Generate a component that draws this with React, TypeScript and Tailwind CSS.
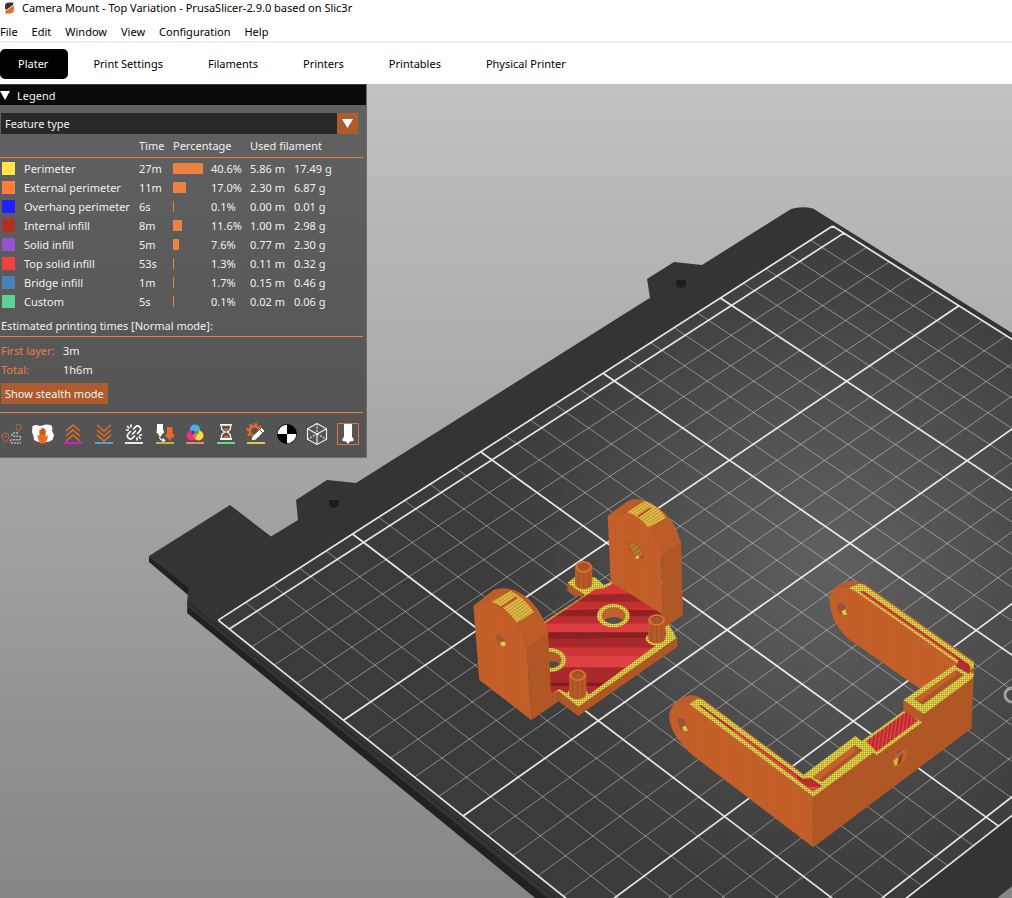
import React from "react";

type Pt = [number, number];

/* ---------- Perspective of the print bed ---------- */

// Bed millimetres (x along the back edge, y towards the front) to view units.
function project(x: number, y: number): Pt {
  const w = 0.000475 * x - 0.000478 * y + 1;
  return [
    (2.859 * x + 2.117 * y + 229.3) / w,
    (-1.473 * x + 1.48 * y + 629) / w,
  ];
}

const FRONT = 204.6;
const BACK = -5;

function points(list: Pt[]): string {
  return list.map(([x, y]) => `${x.toFixed(1)},${y.toFixed(1)}`).join(" ");
}

function segment(a: Pt, b: Pt): string {
  return `M${a[0].toFixed(1)} ${a[1].toFixed(1)}L${b[0].toFixed(1)} ${b[1].toFixed(1)}`;
}

function gridPaths() {
  let thin = "";
  let thick = "";
  for (let x = 0; x <= 250; x += 10) {
    const d = segment(project(x, BACK), project(x, FRONT));
    if (x % 50 === 0) thick += d;
    else thin += d;
  }
  for (let y = 0; y <= 200; y += 10) {
    const d = segment(project(0, y), project(250, y));
    if (y % 50 === 0) thick += d;
    else thin += d;
  }
  thick += segment(project(0, BACK), project(250, BACK));
  thick += segment(project(0, FRONT), project(250, FRONT));
  return { thin, thick };
}

function Defs() {
  return (
    <defs>
      <linearGradient id="sky" x1="0" y1="0" x2="0" y2="1">
        <stop offset="0" stopColor="#c1c1c1" />
        <stop offset="1" stopColor="#868686" />
      </linearGradient>
      <radialGradient id="sheet" gradientUnits="userSpaceOnUse" cx="830" cy="560" r="350">
        <stop offset="0" stopColor="#606060" />
        <stop offset="0.45" stopColor="#505050" />
        <stop offset="0.8" stopColor="#414141" />
        <stop offset="1" stopColor="#3b3b3b" />
      </radialGradient>
      <pattern id="yellow" width="6" height="6" patternUnits="userSpaceOnUse">
        <rect width="6" height="6" fill="#d0bf3c" />
        <rect width="3" height="3" fill="#eadd50" />
        <rect x="3" y="3" width="3" height="3" fill="#a59c34" />
      </pattern>
      <pattern id="face" width="9" height="6" patternUnits="userSpaceOnUse">
        <rect width="9" height="6" fill="#c6602a" />
        <rect x="6" width="3" height="6" fill="#c05c27" />
      </pattern>
      <pattern id="side" width="9" height="12" patternUnits="userSpaceOnUse" patternTransform="skewY(-30)">
        <rect width="9" height="12" fill="#b25826" />
        <rect x="6" y="3" width="3" height="6" fill="#a85223" />
      </pattern>
      <pattern id="arc" width="6" height="6" patternUnits="userSpaceOnUse" patternTransform="rotate(-35)">
        <rect width="6" height="6" fill="#c9642b" />
        <rect y="3" width="6" height="3" fill="#b05425" />
      </pattern>
      <pattern id="arcYellow" width="12" height="8" patternUnits="userSpaceOnUse" patternTransform="rotate(-35)">
        <rect width="12" height="8" fill="#c98a32" />
        <rect width="12" height="4" fill="#dccf48" />
      </pattern>
      <pattern id="ribs" width="11" height="30" patternUnits="userSpaceOnUse" patternTransform="skewX(-8)">
        <rect width="11" height="30" fill="#e23e42" />
        <rect x="6" width="5" height="30" fill="#ae2a2e" />
      </pattern>
    </defs>
  );
}

function Plate() {
  const { thin, thick } = gridPaths();
  const sheet = points([
    project(0, BACK),
    project(250, BACK),
    project(250, FRONT),
    project(0, FRONT),
  ]);
  return (
    <g>
      <path
        d="M149 556L149 562L188 595L187 613L545 906H990L996 898L1012 886V600L190 588Z"
        fill="#212121"
      />
      <path
        d="M149 556L230 505L271 536.500L298 520L296 500L327 480L356 483L650 297.700L647 279L674 262L702 265L791 209Q801 206 813 208.500L1012 333V886L990 904H555L187 606L188.500 588Z"
        fill="#343434"
      />
      <path d="M187.500 602L560 902" stroke="#232323" strokeWidth="1" />
      <g fill="#1d1d1d">
        <path d="M329 500h10v5a5 3 0 0 1-10 0z" />
        <path d="M676 280h10v5a5 3 0 0 1-10 0z" />
      </g>
      <polygon points={sheet} fill="url(#sheet)" />
      <path d={thin} stroke="#ffffff" strokeOpacity="0.4" strokeWidth="1" fill="none" />
      <path d={thick} stroke="#ffffff" strokeOpacity="0.88" strokeWidth="1.700" fill="none" />
      <circle cx="1012" cy="695" r="7" fill="none" stroke="#9aa3a0" strokeWidth="3" />
    </g>
  );
}

function Post({ x, y, h }: { x: number; y: number; h: number }) {
  return (
    <g>
      <ellipse cx={x} cy={y + h + 2} rx="33" ry="20" fill="url(#yellow)" />
      <path d={`M${x - 26} ${y}V${y + h}A26 16 0 0 0 ${x + 26} ${y + h}V${y}Z`} fill="#b85a28" />
      <path d={`M${x - 15} ${y}V${y + h + 10}M${x} ${y}V${y + h + 14}M${x + 15} ${y}V${y + h + 10}`} stroke="#a65123" strokeWidth="4" />
      <ellipse cx={x} cy={y} rx="26" ry="18" fill="#c9642b" />
      <ellipse cx={x} cy={y} rx="22" ry="14" fill="none" stroke="#dd7838" strokeWidth="3" />
      <ellipse cx={x} cy={y + 1} rx="16" ry="11" fill="#a9532a" />
      <path d={`M${x - 16} ${y}A16 11 0 0 1 ${x + 16} ${y}`} fill="none" stroke="#8a4420" strokeWidth="3" />
    </g>
  );
}

function BracketModel() {
  return (
    <g transform="translate(460 480) scale(0.33333)">
      {/* base plate */}
      <path d="M322 310V332L346 350L375 345V315Z" fill="#b25826" />
      <path d="M296 632V664L355 708L652 500V474L355 678Z" fill="url(#side)" />
      <path
        d="M322 308L346 290L405 292L432 315L458 303L607 400L650 474L355 680L296 632L272 645L230 600L232 440L375 345Z"
        fill="url(#yellow)"
      />
      <clipPath id="infill">
        <path d="M378 347L405 328L432 325L462 308L607 402L620 472L372 654L350 655L298 627L276 640L240 600V440Z" />
      </clipPath>
      <g clipPath="url(#infill)">
        <rect x="200" y="300" width="460" height="390" fill="#d63538" />
        <path d="M200 348L660 338V366H200Z" fill="#9a2628" />
        <rect x="200" y="365" width="460" height="20" fill="#c43032" />
        <path d="M200 394L430 387L660 392V410H200Z" fill="#8f2224" />
        <rect x="200" y="409" width="460" height="22" fill="#b82d2f" />
        <rect x="200" y="431" width="460" height="26" fill="#dc3d40" />
        <path d="M200 457H660V472L200 480Z" fill="#8a2022" />
        <path d="M200 480L660 472V503H200Z" fill="#a9282b" />
        <rect x="200" y="503" width="460" height="25" fill="#cf3436" />
        <rect x="200" y="528" width="460" height="34" fill="#de4144" />
        <rect x="200" y="562" width="460" height="46" fill="#a9282b" />
        <rect x="200" y="608" width="460" height="10" fill="#7e1c1e" />
        <rect x="200" y="618" width="460" height="60" fill="#b02a2d" />
      </g>
      <path d="M248 428L375 346" stroke="#c6602a" strokeWidth="3" />
      <ellipse cx="460" cy="407" rx="49" ry="35" fill="url(#yellow)" />
      <ellipse cx="461" cy="407" rx="35" ry="25" fill="#c0602a" />
      <path d="M432 420Q460 402 490 420Q478 431 461 431Q444 431 432 420Z" fill="#50504e" />
      <ellipse cx="269" cy="540" rx="49" ry="36" fill="url(#yellow)" />
      <ellipse cx="269" cy="540" rx="35" ry="25" fill="#b5582a" />
      <path d="M264 545Q285 540 300 552Q290 563 264 564Z" fill="#4c4c4c" />
      {/* rear lug */}
      <path d="M605 225L663 185L669 405L614 442L607 400Z" fill="url(#side)" />
      <path
        d="M443 107L505 62Q535 52 565 65Q632 100 652 155L663 187L604 228C590 170 560 125 520 104C495 92 470 95 443 107Z"
        fill="url(#arc)"
      />
      <path d="M500 97L555 63Q600 80 618 115L562 143Q535 108 500 97Z" fill="url(#arcYellow)" />
      <path d="M534 110L572 84" stroke="#c9452e" strokeWidth="6" />
      <path d="M443 107C470 93 495 92 520 104C560 125 590 170 604 226L607 402L452 306Z" fill="url(#face)" />
      <path d="M497 180L520 184L550 212L551 244L522 234L502 208Z" fill="#b3602a" />
      <path d="M508 197L522 190L546 212L544 232L524 228Z" fill="#b57a30" />
      <path d="M510 208L530 193M518 218L540 202M524 228L546 212" stroke="#8f5a26" strokeWidth="3" />
      <path d="M524 234L534 226L542 238Z" fill="#e6da4d" />
      <path d="M534 234L550 223V232L540 237Z" fill="#e0323a" />
      {/* posts */}
      <Post x={371} y={261} h={50} />
      <Post x={590} y={420} h={54} />
      <Post x={353} y={586} h={56} />
      {/* front lug */}
      <path d="M200 496L264 457L273 640L296 634V664L214 720Z" fill="url(#side)" />
      <path
        d="M40 378L100 330Q130 318 170 333C222 360 250 405 264 458L200 500C180 440 160 410 125 384C95 362 65 365 40 378Z"
        fill="url(#arc)"
      />
      <path d="M94 366L152 332Q190 350 222 396L170 428Q135 378 94 366Z" fill="url(#arcYellow)" />
      <path d="M124 382L170 352" stroke="#c9452e" strokeWidth="6" />
      <path d="M40 378C65 363 95 362 125 384C165 410 185 450 200 500L214 720L58 600Z" fill="url(#face)" />
      <path d="M106 462L124 466L138 484V500L120 494L108 478Z" fill="#a2592b" />
      <path d="M119 488L134 484L138 497L126 499Z" fill="#dccf48" />
    </g>
  );
}

function CradleModel() {
  return (
    <g transform="translate(660 570) scale(0.33333)">
      {/* rear arm */}
      <path d="M508 85C510 55 540 42 572 55L600 58L900 276L888 290L780 356L565 206C530 175 508 130 508 85Z" fill="url(#face)" />
      <path d="M512 70Q530 38 570 33Q596 32 612 44L595 66Q560 45 540 50Z" fill="url(#arc)" />
      <path d="M566 54L598 41L612 44L942 278V318L910 328L888 300L892 280L584 62Z" fill="url(#yellow)" />
      <path d="M612 42L942 276" stroke="#c6602a" strokeWidth="4" fill="none" />
      <path d="M598 64L612 64L928 284L926 314L888 292L896 272Z" fill="#b62c32" />
      <path d="M606 68L890 266" stroke="#e8443f" strokeWidth="4" />
      <path d="M532 98L548 102L564 128L560 138L540 132L532 115Z" fill="#9e552c" />
      <path d="M544 124L556 118L562 134L550 136Z" fill="#d6c645" />
      <path d="M544 100L554 112" stroke="#7b3fa0" strokeWidth="4" />
      {/* long wall */}
      <path d="M460 678L645 544L790 450V430L942 290L935 475L460 832Z" fill="url(#side)" />
      {/* centre channel */}
      <path d="M604 514L738 418L788 456L650 556Z" fill="url(#yellow)" />
      <path d="M618 514L740 424L774 452L650 545Z" fill="url(#ribs)" />
      {/* rear pocket */}
      <path d="M730 390V422L790 460V430Z" fill="#b85a28" />
      <path d="M730 390L884 284L942 312L938 324L792 432Z" fill="url(#yellow)" />
      <path d="M762 387L888 300L912 315L788 404Z" fill="#a95527" />
      <path d="M762 387L888 300L890 312L776 396Z" fill="#c6632c" />
      <path d="M888 290L928 312L932 290L898 268Z" fill="#b62c32" />
      {/* front pocket */}
      <path d="M426 618L586 498L645 544L460 680Z" fill="url(#yellow)" />
      <path d="M458 622L584 526L608 541L486 636Z" fill="#a95527" />
      <path d="M458 622L584 526L586 544L474 630Z" fill="#c6632c" />
      {/* front arm */}
      <path d="M28 440C28 405 55 385 92 402L460 680V832L110 565C65 530 28 480 28 440Z" fill="url(#face)" />
      <path d="M32 420Q45 384 90 376Q112 375 126 388L105 410Q75 390 50 400Z" fill="url(#arc)" />
      <path d="M88 402L112 386L126 388L430 614L488 645L460 680Z" fill="url(#yellow)" />
      <path d="M126 386L430 612" stroke="#c6602a" strokeWidth="3" />
      <path d="M116 406L124 406L428 626L452 624L486 648L458 664L410 628Z" fill="#b62c32" />
      <path d="M220 480L410 622" stroke="#e8443f" strokeWidth="5" />
      <path d="M440 650L484 650L458 664Z" fill="#e8443f" />
      <path d="M54 444L70 448L86 472L82 486L62 478L54 462Z" fill="#9e552c" />
      <path d="M66 472L78 466L84 482L72 483Z" fill="#d6c645" />
      <path d="M66 446L72 456" stroke="#7b3fa0" strokeWidth="4" />
      {/* screw hole */}
      <path d="M698 572L710 548L738 540L740 560L718 588L698 590Z" fill="#c6632c" />
      <path d="M700 572L714 562L720 574L706 588Z" fill="#d8b441" />
      <path d="M716 560L730 550L722 580L712 584Z" fill="#8e451e" />
      <path d="M708 552L722 542" stroke="#6a3aa8" strokeWidth="3" />
    </g>
  );
}

function Scene() {
  return (
    <svg
      className="absolute inset-0 h-full w-full"
      viewBox="0 84 1012 814"
      preserveAspectRatio="xMinYMin slice"
      role="img"
      aria-label="3D preview of the sliced plate"
    >
      <Defs />
      <rect x="0" y="84" width="1012" height="814" fill="url(#sky)" />
      <Plate />
      <BracketModel />
      <CradleModel />
    </svg>
  );
}

/* ---------- Legend ---------- */

interface Feature {
  name: string;
  swatch: string;
  time: string;
  percent: number;
  length: string;
  weight: string;
}

const features: Feature[] = [
  { name: "Perimeter", swatch: "bg-[#ffe64d]", time: "27m", percent: 40.6, length: "5.86 m", weight: "17.49 g" },
  { name: "External perimeter", swatch: "bg-[#ff7d38]", time: "11m", percent: 17.0, length: "2.30 m", weight: "6.87 g" },
  { name: "Overhang perimeter", swatch: "bg-[#1f1fff]", time: "6s", percent: 0.1, length: "0.00 m", weight: "0.01 g" },
  { name: "Internal infill", swatch: "bg-[#b03029]", time: "8m", percent: 11.6, length: "1.00 m", weight: "2.98 g" },
  { name: "Solid infill", swatch: "bg-[#9654cc]", time: "5m", percent: 7.6, length: "0.77 m", weight: "2.30 g" },
  { name: "Top solid infill", swatch: "bg-[#f04040]", time: "53s", percent: 1.3, length: "0.11 m", weight: "0.32 g" },
  { name: "Bridge infill", swatch: "bg-[#4d80ba]", time: "1m", percent: 1.7, length: "0.15 m", weight: "0.46 g" },
  { name: "Custom", swatch: "bg-[#5ed194]", time: "5s", percent: 0.1, length: "0.02 m", weight: "0.06 g" },
];

function FeatureTable() {
  return (
    <table className="w-[363px] table-fixed border-separate border-spacing-0 text-left">
      <colgroup>
        <col className="w-6" />
        <col className="w-[115px]" />
        <col className="w-[34px]" />
        <col className="w-[38px]" />
        <col className="w-[39px]" />
        <col className="w-11" />
        <col />
      </colgroup>
      <thead>
        <tr className="h-6 [&>th]:border-b [&>th]:border-[#ed7d42] [&>th]:p-0 [&>th]:font-normal">
          <th aria-label="Colour" />
          <th aria-label="Feature" />
          <th>Time</th>
          <th colSpan={2}>Percentage</th>
          <th colSpan={2}>Used filament</th>
        </tr>
      </thead>
      <tbody className="before:block before:h-px">
        {features.map((f) => (
          <tr key={f.name} className="h-[19px] whitespace-nowrap [&>td]:p-0">
            <td>
              <span className={`ml-0.5 block h-[13px] w-[13px] ${f.swatch}`} />
            </td>
            <td>{f.name}</td>
            <td>{f.time}</td>
            <td>
              <span
                className="block h-[11px] bg-[#ed8042]"
                style={{ width: Math.max(1, Math.round(f.percent * 0.74)) }}
              />
            </td>
            <td>{f.percent.toFixed(1)}%</td>
            <td>{f.length}</td>
            <td>{f.weight}</td>
          </tr>
        ))}
      </tbody>
    </table>
  );
}

const O = "#ed6b21";

const TOOLS: { label: string; on?: boolean; art: React.ReactNode }[] = [
  {
    label: "Travel",
    art: (
      <g fill="none">
        <path d="M4.500 19.500C2.500 17 1 15.300 1 13.500a3.500 3.500 0 0 1 7 0C8 15.300 6.500 17 4.500 19.500Z" stroke="#c46a3a" />
        <circle cx="4.500" cy="13.500" r="1" stroke="#c46a3a" />
        <path d="M17.500 8.500C16 6.500 15 5.300 15 3.700a2.500 2.500 0 0 1 5 0C20 5.300 19 6.500 17.500 8.500Z" stroke="#c46a3a" />
        <path d="M17 10H12.500a1.500 1.500 0 0 0 0 3.300H18a1.500 1.500 0 0 1 0 3.500H11a1.500 1.500 0 0 0 0 3.200H20" stroke="#b9b9b9" strokeWidth="1.500" strokeDasharray="2 1" />
      </g>
    ),
  },
  {
    label: "Wipe",
    art: (
      <g>
        <path d="M0.500 3L4 2L8 3L14 1.500L19 2L20.500 5L20 8L22 12L20.500 17L16 19L6 19L2 17L1.500 13L0 9Z" fill="#fff" />
        <path d="M8 20.500L6.500 17L5.300 12.500Q6 11.300 7.300 13V7Q8 6.200 8.800 7V5.500Q9.700 4.700 10.500 5.500V5Q11.400 4.200 12.200 5.200V6.500Q13.100 6 13.800 7V14L15 12.500Q16.300 12.200 16 13.500L13.500 20.500Z" fill={O} />
        <path d="M8.800 7V12M10.500 6V12M12.200 6V12" stroke="#8f4a22" strokeWidth="0.700" />
      </g>
    ),
  },
  {
    label: "Retractions",
    art: (
      <g>
        <path d="M4 8L11 2L18 8M4 13L11 7L18 13M4 18L11 12L18 18" stroke={O} strokeWidth="1.400" fill="none" />
        <rect x="2" y="19" width="18" height="2" fill="#d11fd1" />
      </g>
    ),
  },
  {
    label: "Deretractions",
    art: (
      <g>
        <path d="M4 2L11 8L18 2M4 7L11 13L18 7M4 12L11 18L18 12" stroke={O} strokeWidth="1.400" fill="none" />
        <rect x="2" y="19" width="18" height="2" fill="#4aaad0" />
      </g>
    ),
  },
  {
    label: "Seams",
    art: (
      <g>
        <path
          d="M10.500 6L12.500 4a2.900 2.900 0 0 1 4.200 4.200L14.500 10.500M11.500 13L9.500 15a2.900 2.900 0 0 1-4.200-4.200L7.500 8.500M9.500 11L12.500 8M4.500 3.500L6 5M8 2V4M3.500 7H5.300M17.500 15.500L16 14M14 17V15M18.500 12H16.700"
          stroke="#fff"
          strokeWidth="1.600"
          fill="none"
          strokeLinecap="round"
        />
        <rect x="2" y="19" width="18" height="2" fill="#e8e8e8" />
      </g>
    ),
  },
  {
    label: "Tool changes",
    art: (
      <g>
        <path d="M3 1H9V7.500H10V10L8 11V12L6 14L4.500 12V11L2.500 10V7.500H3Z" fill="#fff" />
        <path d="M13 4H18.500V11H20V14L17 15V16L15.700 18L14.400 16V15L11.500 14V11H13Z" fill={O} />
        <path d="M5.500 14Q6 17.500 10 17.500M8.500 15.500L10.700 17.500L8.500 19" stroke="#fff" fill="none" strokeWidth="1.200" />
        <rect x="2" y="19" width="18" height="2" fill="#bdb64e" />
      </g>
    ),
  },
  {
    label: "Color changes",
    art: (
      <g>
        <circle cx="11" cy="6.500" r="5" fill="#3fb4ea" />
        <circle cx="7.500" cy="12.500" r="5" fill="#ee2f7b" />
        <circle cx="14.500" cy="12.500" r="5" fill="#ffd83a" />
        <path d="M11 9Q13 11 12.500 13L11 16Q9 14 9.500 11Z" fill="#f0703a" />
        <path d="M7 8.500Q9 7 11 9Q10 11 9.500 11.500Q7 11 7 8.500Z" fill="#3b3fa3" />
        <path d="M15 8.500Q13 7 11 9Q12 11 12.500 11.500Q15 11 15 8.500Z" fill="#3a9c5c" />
        <rect x="2" y="19" width="18" height="2" fill="#da8f86" />
      </g>
    ),
  },
  {
    label: "Print pauses",
    art: (
      <g>
        <path d="M5 1.800H17M5 16H17" stroke="#fff" strokeWidth="1.800" />
        <path d="M6.500 3V5Q6.500 7 10 9Q6.500 11 6.500 13V15M15.500 3V5Q15.500 7 12 9Q15.500 11 15.500 13V15" stroke="#fff" strokeWidth="1.200" fill="none" />
        <path d="M8 5.500H14L11 8ZM8 15Q9 12.500 11 12.500Q13 12.500 14 15Z" fill={O} />
        <rect x="2" y="19" width="18" height="2" fill="#56e48a" />
      </g>
    ),
  },
  {
    label: "Custom G-codes",
    art: (
      <g>
        <circle cx="9.500" cy="8" r="4.800" stroke={O} strokeWidth="2.600" fill="none" />
        <circle cx="9.500" cy="8" r="7" stroke={O} strokeWidth="2" strokeDasharray="2.750 2.750" fill="none" />
        <path d="M6 18L7 13.500L16.500 4.500L20 8L10.500 17Z" fill="#fff" stroke="#555" />
        <path d="M14.500 6.500L18 10" stroke="#555" />
        <rect x="2" y="19" width="18" height="2" fill="#ddc94a" />
      </g>
    ),
  },
  {
    label: "Center of gravity",
    art: (
      <g>
        <circle cx="11" cy="11" r="10" fill="#000" />
        <path d="M11 11V1.700A9.300 9.300 0 0 0 1.700 11ZM11 11V20.300A9.300 9.300 0 0 0 20.300 11Z" fill="#fff" />
      </g>
    ),
  },
  {
    label: "Shells",
    art: (
      <g fill="none" stroke="#f2f2f2" strokeWidth="1.100">
        <path d="M11 0.500L20.500 5.800V16.200L11 21.500L1.500 16.200V5.800ZM1.500 5.800L11 11L20.500 5.800M11 11V21.500" />
        <path d="M11 0.500V11L1.500 16.200M11 11L20.500 16.200" strokeDasharray="2 1.300" />
      </g>
    ),
  },
  {
    label: "Tool marker",
    on: true,
    art: (
      <g>
        <rect x="0.500" y="0.500" width="21" height="21" fill="none" stroke="#d8743e" />
        <path d="M7 1H15V14L16.500 15.500V18L13 18.500L11 21L9 18.500L5.500 18V15.500L7 14Z" fill="#fff" />
      </g>
    ),
  },
];

function Legend() {
  return (
    <section
      aria-label="Legend"
      className="relative w-[367px] border-r border-b border-[#6b6b74] bg-linear-to-b from-[#626262] to-[#535353] pb-3 font-['Noto_Sans','Open_Sans',sans-serif] text-[11px] leading-[19px] text-[#f0f0f0]"
    >
      <button type="button" className="flex h-[21px] w-full items-center gap-[7px] border-t border-[#3c3c46] bg-[#0a0a0a] text-left">
        <svg className="h-[9px] w-[10px]" viewBox="0 0 10 9" aria-hidden="true">
          <path d="M0 0H10L5 9Z" fill="#fff" />
        </svg>
        Legend
      </button>

      <div className="relative mt-2 mr-2 ml-px">
        <select
          aria-label="View type"
          defaultValue="feature"
          className="block h-[21px] w-full appearance-none bg-[#282828] pr-6 pl-1 text-[#f0f0f0] outline-none"
        >
          <option value="feature">Feature type</option>
          <option value="height">Height (mm)</option>
          <option value="speed">Speed (mm/s)</option>
        </select>
        <span className="pointer-events-none absolute inset-y-0 right-0 flex w-[21px] items-center justify-center bg-[#ad5c30]">
          <svg className="h-[9px] w-[11px]" viewBox="0 0 11 9" aria-hidden="true">
            <path d="M0 0H11L5.500 9Z" fill="#fff" />
          </svg>
        </span>
      </div>

      <FeatureTable />

      <p className="mt-[5px] mr-[3px] border-b border-[#ed7d42] pb-px pl-px">Estimated printing times [Normal mode]:</p>
      <dl className="mt-1 ml-px grid grid-cols-[62px_1fr]">
        <dt className="text-[#ed7d42]">First layer:</dt>
        <dd>3m</dd>
        <dt className="text-[#ed7d42]">Total:</dt>
        <dd>1h6m</dd>
      </dl>
      <button type="button" className="mt-1 ml-px block h-[21px] bg-[#ad5c30] px-1">
        Show stealth mode
      </button>

      <div className="mt-2 mr-[3px] flex justify-between border-t border-[#ed7d42] pt-2.5 pr-1 pl-px">
        {TOOLS.map((tool) => (
          <button key={tool.label} type="button" aria-label={tool.label} aria-pressed={!!tool.on} className="h-[22px] w-[22px]">
            <svg viewBox="0 0 22 22" className="block h-full w-full" aria-hidden="true">
              {tool.art}
            </svg>
          </button>
        ))}
      </div>
    </section>
  );
}

/* ---------- Window ---------- */

const MENUS = ["File", "Edit", "Window", "View", "Configuration", "Help"];
const TABS = ["Print Settings", "Filaments", "Printers", "Printables", "Physical Printer"];

export default function App() {
  return (
    <div className="flex min-h-screen flex-col bg-white font-['Noto_Sans','Open_Sans',sans-serif] text-[11px] text-black">
      <header>
        <div className="flex h-4 items-center gap-[7px] pl-1">
          <svg className="h-3 w-[11px]" viewBox="0 0 11 12" aria-hidden="true">
            <path d="M1 6V4Q1 0.500 5 0.500H9.500L9 3L2 8Z" fill="#333" />
            <path d="M10 3.500V7Q10 11.500 5.500 11.500H1L1.500 9Z" fill="#ed6b21" />
          </svg>
          <span className="whitespace-nowrap">Camera Mount - Top Variation - PrusaSlicer-2.9.0 based on Slic3r</span>
        </div>
        <nav aria-label="Menu" className="flex h-[27px] items-center gap-3.5 border-b-2 border-[#f0f0f0] pt-2">
          {MENUS.map((m) => (
            <button key={m} type="button">
              {m}
            </button>
          ))}
        </nav>
        <div role="tablist" className="flex items-center gap-[45px] pt-1.5 pb-[5px]">
          <button role="tab" aria-selected="true" type="button" className="-mr-5 h-[30px] rounded-[5px] bg-black pr-5 pl-[18px] text-white">
            Plater
          </button>
          {TABS.map((t) => (
            <button key={t} role="tab" aria-selected="false" type="button" className="h-[30px]">
              {t}
            </button>
          ))}
        </div>
      </header>
      <main className="relative flex-1 overflow-hidden">
        <Scene />
        <Legend />
      </main>
    </div>
  );
}
